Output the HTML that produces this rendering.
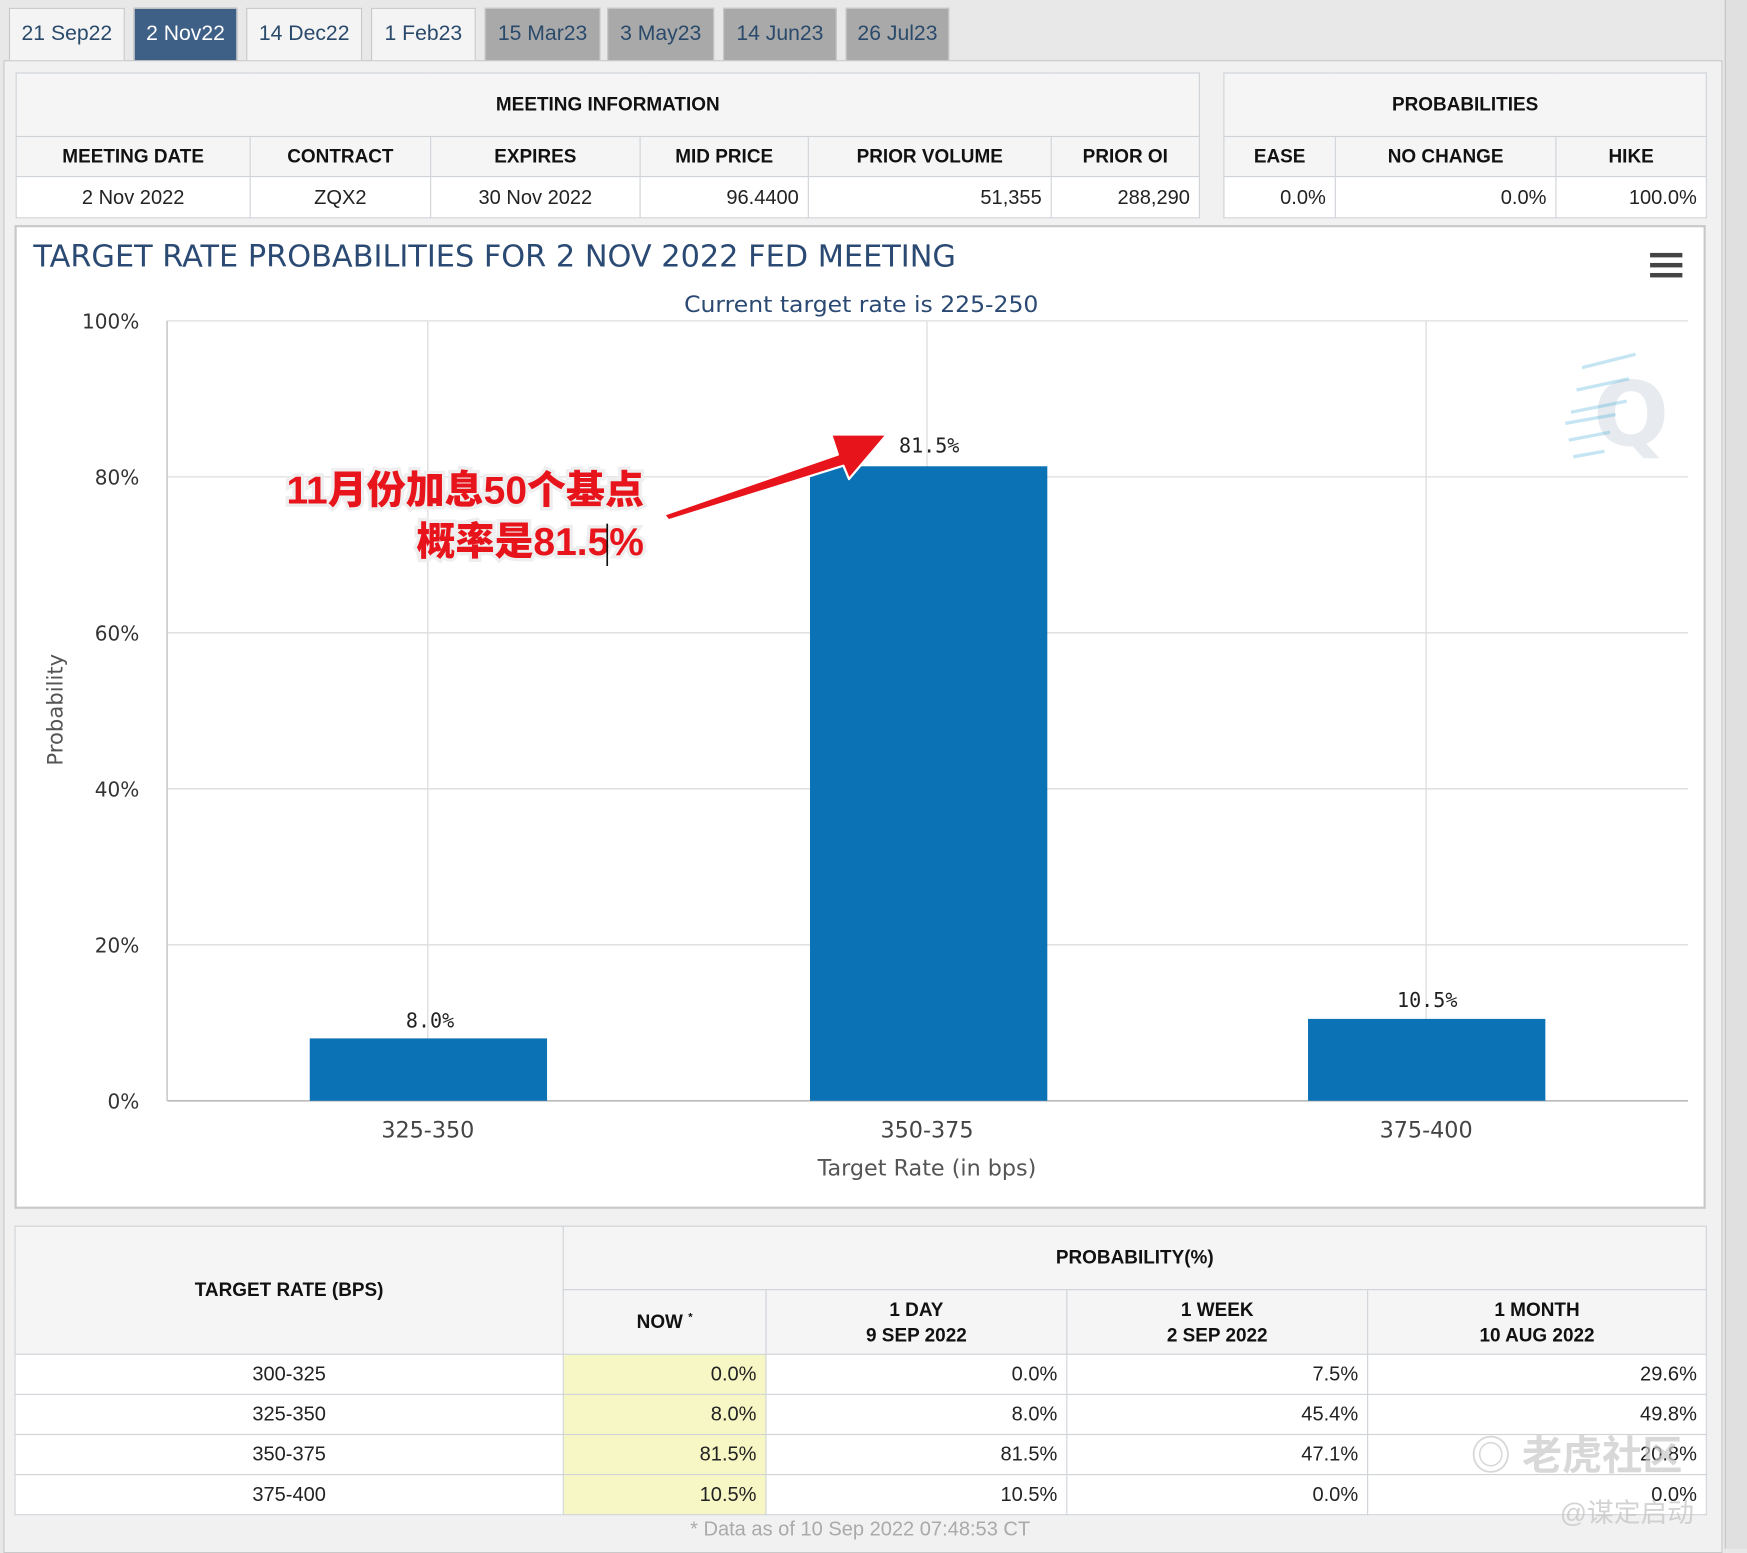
<!DOCTYPE html>
<html><head><meta charset="utf-8"><style>
html,body{margin:0;padding:0;width:1747px;height:1548px;overflow:hidden;background:#e8e8e8;}
#w{position:absolute;left:0;top:0;width:1568px;height:1390px;transform:scale(1.11416);transform-origin:0 0;font-family:"Liberation Sans",Arial,sans-serif;}
.a{position:absolute;box-sizing:border-box;}
.tab{position:absolute;top:7px;height:47px;border:1px solid #c8c8c8;border-bottom:none;background:#f4f4f4;color:#2a4a6b;font-size:19px;line-height:46px;text-align:center;box-sizing:border-box;}
.tab.g{background:#a9a9a9;}
.tab.s{background:#3e5f86;color:#fff;}
table{border-collapse:collapse;position:absolute;table-layout:fixed;}
td{border:1px solid #cfd3d8;padding:0 8px;font-size:18px;color:#222;white-space:nowrap;}
th{border:1px solid #cfd3d8;font-size:17px;color:#111;font-weight:bold;background:#f5f5f5;}
</style></head><body><div id="w">
<div class="a" style="left:3px;top:54px;width:1543px;height:1340px;background:#f1f1f1;border:1px solid #c8c8c8;"></div>
<div class="a" style="left:1548px;top:0;width:20px;height:1390px;background:#e0e0e0;border-left:1px solid #c4c4c4;"></div>
<div class="tab" style="left:8px;width:104px">21 Sep22</div>
<div class="tab s" style="left:120px;width:93px">2 Nov22</div>
<div class="tab" style="left:221px;width:104px">14 Dec22</div>
<div class="tab" style="left:333px;width:94px">1 Feb23</div>
<div class="tab g" style="left:435px;width:104px">15 Mar23</div>
<div class="tab g" style="left:545px;width:96px">3 May23</div>
<div class="tab g" style="left:649px;width:102px">14 Jun23</div>
<div class="tab g" style="left:759px;width:93px">26 Jul23</div>

<table style="left:14px;top:65px;width:1062px;">
<colgroup><col style="width:210px"><col style="width:162px"><col style="width:188px"><col style="width:151px"><col style="width:218px"><col style="width:133px"></colgroup>
<tr style="height:57px"><th colspan="6">MEETING INFORMATION</th></tr>
<tr style="height:36px"><th>MEETING DATE</th><th>CONTRACT</th><th>EXPIRES</th><th>MID PRICE</th><th>PRIOR VOLUME</th><th>PRIOR OI</th></tr>
<tr style="height:37px;background:#fff"><td style="text-align:center">2 Nov 2022</td><td style="text-align:center">ZQX2</td><td style="text-align:center">30 Nov 2022</td><td style="text-align:right">96.4400</td><td style="text-align:right">51,355</td><td style="text-align:right">288,290</td></tr>
</table>
<table style="left:1098px;top:65px;width:433px;">
<colgroup><col style="width:100px"><col style="width:198px"><col style="width:135px"></colgroup>
<tr style="height:57px"><th colspan="3">PROBABILITIES</th></tr>
<tr style="height:36px"><th>EASE</th><th>NO CHANGE</th><th>HIKE</th></tr>
<tr style="height:37px;background:#fff"><td style="text-align:right">0.0%</td><td style="text-align:right">0.0%</td><td style="text-align:right">100.0%</td></tr>
</table>

<div class="a" style="left:13px;top:202px;width:1518px;height:883px;background:#fff;border:2px solid #c9c9c9;"></div>
<svg class="a" style="left:0;top:0" width="1568" height="1100" viewBox="0 0 1568 1100" font-family="DejaVu Sans, Liberation Sans, sans-serif">
<text x="30" y="239" font-size="27" fill="#2b4a73" textLength="828" lengthAdjust="spacingAndGlyphs">TARGET RATE PROBABILITIES FOR 2 NOV 2022 FED MEETING</text>
<text x="773" y="280" font-size="20" fill="#2b4a73" text-anchor="middle" textLength="318" lengthAdjust="spacingAndGlyphs">Current target rate is 225-250</text>
<g fill="#444"><rect x="1481" y="227" width="29" height="4"/><rect x="1481" y="236" width="29" height="4"/><rect x="1481" y="245" width="29" height="4"/></g>
<g stroke="#ddd" stroke-width="1.2">
<line x1="150" y1="288" x2="1515" y2="288"/><line x1="150" y1="428" x2="1515" y2="428"/><line x1="150" y1="568" x2="1515" y2="568"/><line x1="150" y1="708" x2="1515" y2="708"/><line x1="150" y1="848" x2="1515" y2="848"/>
<line x1="384" y1="288" x2="384" y2="988"/><line x1="832" y1="288" x2="832" y2="988"/><line x1="1280" y1="288" x2="1280" y2="988"/>
</g>
<line x1="150" y1="288" x2="150" y2="988" stroke="#ccc" stroke-width="1.5"/>
<line x1="150" y1="988" x2="1515" y2="988" stroke="#bbb" stroke-width="1.5"/>
<g font-size="18" fill="#333" text-anchor="end">
<text x="125" y="295">100%</text><text x="125" y="435">80%</text><text x="125" y="575">60%</text><text x="125" y="715">40%</text><text x="125" y="855">20%</text><text x="125" y="995">0%</text></g>
<text transform="translate(56,637) rotate(-90)" font-size="19" fill="#555" text-anchor="middle">Probability</text>
<g text-opacity="0.12" fill-opacity="0.12"><text x="1430" y="400" font-size="80" font-weight="bold" fill="#3a5a7a">Q</text>
<g stroke="#3fa8d8" stroke-opacity="0.3" stroke-width="3"><line x1="1410" y1="370" x2="1460" y2="360"/><line x1="1405" y1="380" x2="1450" y2="372"/><line x1="1415" y1="350" x2="1462" y2="340"/><line x1="1420" y1="330" x2="1468" y2="318"/><line x1="1408" y1="395" x2="1445" y2="388"/><line x1="1412" y1="410" x2="1440" y2="405"/></g></g>
<g fill="#0b72b5">
<rect x="278" y="932" width="213" height="56"/><rect x="727" y="418.5" width="213" height="569.5"/><rect x="1174" y="914.5" width="213" height="73.5"/></g>
<g font-size="18" fill="#222" text-anchor="middle" font-family="DejaVu Sans Mono, Liberation Mono, monospace">
<text x="386" y="922">8.0%</text><text x="834" y="406">81.5%</text><text x="1281" y="904">10.5%</text></g>
<g font-size="20" fill="#444" text-anchor="middle">
<text x="384" y="1021">325-350</text><text x="832" y="1021">350-375</text><text x="1280" y="1021">375-400</text>
<text x="832" y="1055" fill="#555">Target Rate (in bps)</text></g>
<path d="M596 462 L752 408 L746 390 L796 390 L762 430 L757 418 L600 467 Z" fill="#e8141b" stroke="#fff" stroke-width="2" stroke-linejoin="round"/>
<g font-family="Liberation Sans, Noto Sans CJK SC, sans-serif" font-weight="900" font-size="35" text-anchor="end" fill="#e8141b" stroke="#eee" stroke-width="6" paint-order="stroke">
<text x="578" y="452">11月份加息50个基点</text>
<text x="578" y="498">概率是81.5%</text></g>
<line x1="545" y1="470" x2="545" y2="508" stroke="#111" stroke-width="1.5"/>
</svg>

<table style="left:13px;top:1100px;width:1518px;">
<colgroup><col style="width:492px"><col style="width:182px"><col style="width:270px"><col style="width:270px"><col style="width:304px"></colgroup>
<tr style="height:57px"><th rowspan="2">TARGET RATE (BPS)</th><th colspan="4">PROBABILITY(%)</th></tr>
<tr style="height:58px"><th>NOW <sup style="font-size:10px">*</sup></th><th style="line-height:23px">1 DAY<br>9 SEP 2022</th><th style="line-height:23px">1 WEEK<br>2 SEP 2022</th><th style="line-height:23px">1 MONTH<br>10 AUG 2022</th></tr>
<tr style="height:36px;background:#fff"><td style="text-align:center">300-325</td><td style="text-align:right;background:#f7f7c6">0.0%</td><td style="text-align:right">0.0%</td><td style="text-align:right">7.5%</td><td style="text-align:right">29.6%</td></tr>
<tr style="height:36px;background:#fff"><td style="text-align:center">325-350</td><td style="text-align:right;background:#f7f7c6">8.0%</td><td style="text-align:right">8.0%</td><td style="text-align:right">45.4%</td><td style="text-align:right">49.8%</td></tr>
<tr style="height:36px;background:#fff"><td style="text-align:center">350-375</td><td style="text-align:right;background:#f7f7c6">81.5%</td><td style="text-align:right">81.5%</td><td style="text-align:right">47.1%</td><td style="text-align:right">20.8%</td></tr>
<tr style="height:36px;background:#fff"><td style="text-align:center">375-400</td><td style="text-align:right;background:#f7f7c6">10.5%</td><td style="text-align:right">10.5%</td><td style="text-align:right">0.0%</td><td style="text-align:right">0.0%</td></tr>
</table>
<div class="a" style="left:13px;top:1362px;width:1518px;text-align:center;font-size:18px;color:#aaa;">* Data as of 10 Sep 2022 07:48:53 CT</div>
<div class="a" style="left:1320px;top:1278px;font-family:'Liberation Sans','Noto Sans CJK SC',sans-serif;font-size:36px;color:rgba(200,200,200,0.7);font-weight:bold;">◎ 老虎社区</div>
<div class="a" style="left:1400px;top:1338px;font-family:'Liberation Sans','Noto Sans CJK SC',sans-serif;font-size:24px;color:rgba(200,200,200,0.8);">@谋定启动</div>
</div></body></html>
